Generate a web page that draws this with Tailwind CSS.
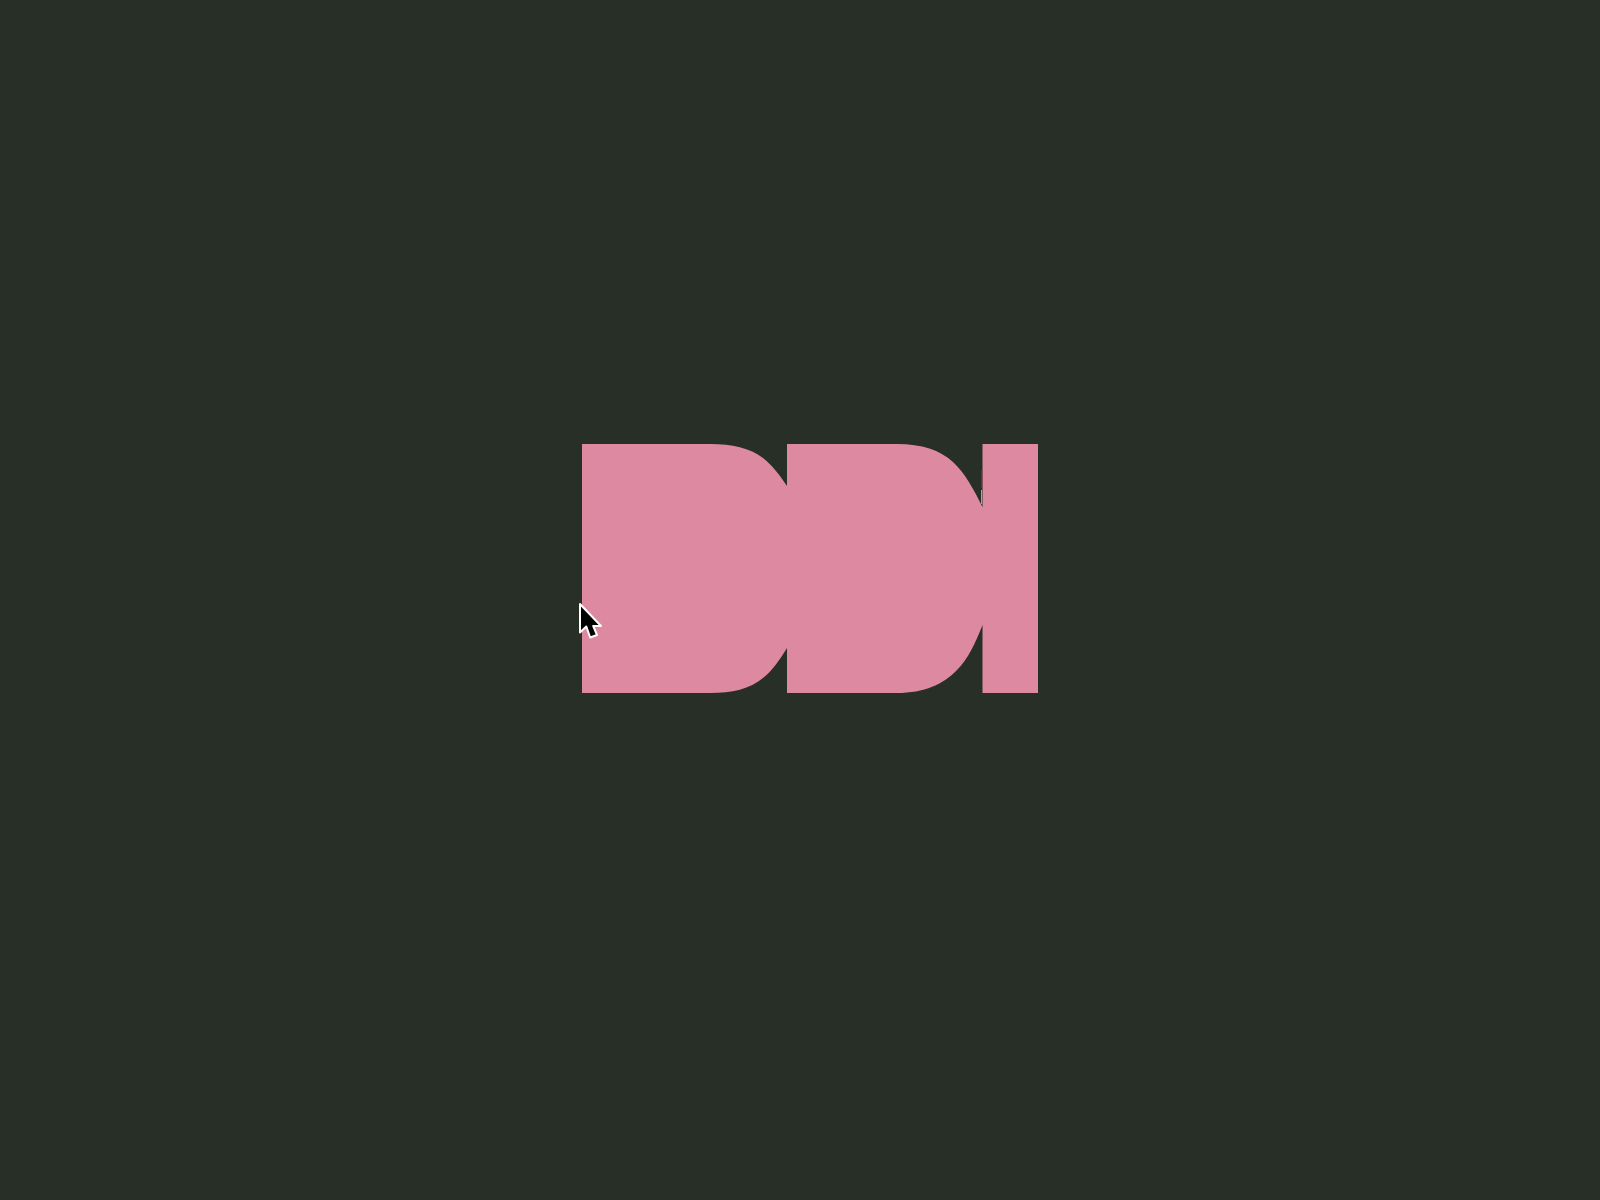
<!DOCTYPE html>
<html lang="en" class="h-full">
<head>
  <meta charset="UTF-8" />
  <meta name="viewport" content="width=device-width, initial-scale=1.0"/>
  <title>Pink shape</title>
  <script src="https://cdn.jsdelivr.net/npm/@tailwindcss/browser@4"></script>
</head>
<body class="h-full bg-[#272f26] overflow-hidden">
  <main class="relative h-[1200px] pl-[582px] pt-[444px]">
    <!-- Merged pink shape -->
    <svg class="block w-[456px] h-[249px]" viewBox="0 0 456 249" fill="#de89a2" aria-hidden="true">
      <path d="M0 0H128C150 0 168 4 181 14C190 21 197 30 205 42V0H315C340 0 358 6 371 18C383 29 392 46 400.5 63V0H456V249H400.5V181C393 200 386 215 375 226C362 240 342 249 315 249H205V204C197 217 190 227 181 234C168 245 150 249 128 249H0Z" />
      <!-- seam along the right notch -->
      <path d="M400 26V44" stroke="#8f3f55" stroke-width="1" fill="none" />
      <path d="M399.5 46V60" stroke="#c9c4c0" stroke-width="0.8" fill="none" />
    </svg>

    <!-- Mouse pointer -->
    <svg class="absolute left-[578px] top-[602px] w-[26px] h-[38px]" viewBox="0 0 26 38" aria-hidden="true">
      <path d="M2 2V30.5L8.3 24.5L12.2 35.5L19 33L15.2 24H23Z" fill="#000" stroke="#fff" stroke-width="2" stroke-linejoin="round" />
    </svg>
  </main>
</body>
</html>
